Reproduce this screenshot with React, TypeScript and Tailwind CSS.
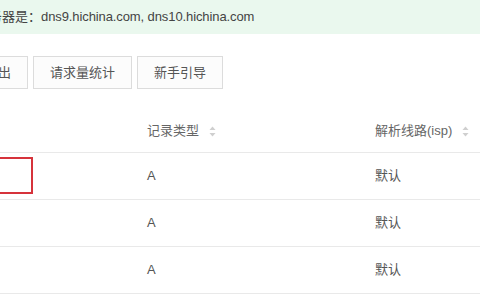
import React from "react";

const font = { fontFamily: '"Liberation Sans", "Noto Sans CJK SC", sans-serif' };

function SortIcon() {
  return (
    <svg width="7" height="11" viewBox="0 0 7 11" className="ml-[10px] shrink-0">
      <path d="M3.5 0.5 L6.5 4 L0.5 4 Z" fill="#cfcfcf" />
      <path d="M3.5 10.5 L6.5 7 L0.5 7 Z" fill="#cfcfcf" />
    </svg>
  );
}

const rows = [
  { type: "A", line: "默认", mark: true },
  { type: "A", line: "默认", mark: false },
  { type: "A", line: "默认", mark: false },
];

export default function App() {
  return (
    <div className="h-[300px] w-[480px] overflow-hidden bg-white text-[13px] text-[#555]" style={font}>
      {/* NS banner */}
      <div className="flex h-[34px] items-center overflow-hidden whitespace-nowrap bg-[#eaf8ee] text-[#444]">
        <span className="ml-[-11px]">
          务器是：<span className="tracking-[-0.1px]">dns9.hichina.com, dns10.hichina.com</span>
        </span>
      </div>

      {/* toolbar */}
      <div className="mt-[22px] flex h-[33px] gap-[5px] whitespace-nowrap">
        <button className="ml-[-32px] flex h-full items-center border border-[#dcdcdc] bg-[#fcfcfc] px-4 text-[#555]">导出</button>
        <button className="flex h-full items-center border border-[#dcdcdc] bg-[#fcfcfc] px-4 text-[#555]">请求量统计</button>
        <button className="flex h-full items-center border border-[#dcdcdc] bg-[#fcfcfc] px-4 text-[#555]">新手引导</button>
      </div>

      {/* table */}
      <div className="mt-[21px]">
        <div className="grid h-[43px] grid-cols-[147px_228px_1fr] items-center border-b border-[#e9e9e9] text-[#666]">
          <div />
          <div className="flex items-center">记录类型<SortIcon /></div>
          <div className="flex items-center whitespace-nowrap">解析线路(isp)<SortIcon /></div>
        </div>
        {rows.map((r, i) => (
          <div key={i} className="grid h-[47px] grid-cols-[147px_228px_1fr] items-center border-b border-[#e9e9e9]">
            <div className="flex items-center">
              {r.mark && <div className="ml-[-12px] mb-[2px] h-[37px] w-[45px] border-2 border-[#d6333b]" />}
            </div>
            <div>{r.type}</div>
            <div>{r.line}</div>
          </div>
        ))}
      </div>
    </div>
  );
}
